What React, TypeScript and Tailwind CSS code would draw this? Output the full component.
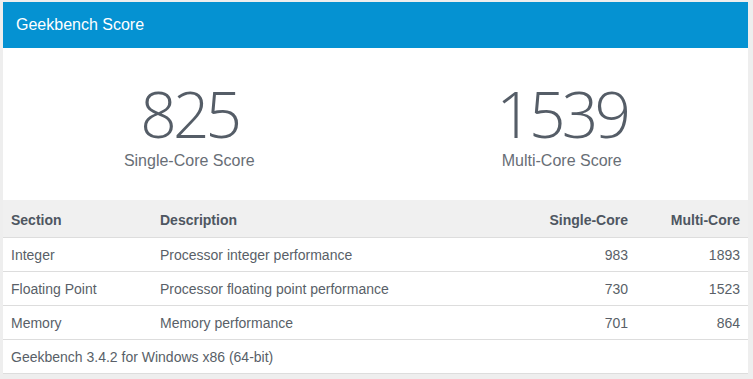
const rows = [
  { section: "Integer", desc: "Processor integer performance", single: "983", multi: "1893" },
  { section: "Floating Point", desc: "Processor floating point performance", single: "730", multi: "1523" },
  { section: "Memory", desc: "Memory performance", single: "701", multi: "864" },
];

const ScoreBlock = ({ value, label }: { value: string; label: string }) => (
  <div className="flex flex-col items-center">
    <span className="text-[64px] leading-[64px] font-light tracking-[-0.06em] text-[#555d67] font-['Open_Sans',sans-serif]">
      {value}
    </span>
    <span className="mt-[5px] text-[16px] leading-[20px] text-[#686e76]">{label}</span>
  </div>
);

export default function App() {
  return (
    <div className="h-[379px] w-[753px] bg-[#eeeeee] pt-[2px] pl-[3px] font-['Liberation_Sans',Arial,sans-serif]">
      <div className="w-[745px] bg-white border-b border-[#dddddd]">
        <div className="h-[46px] bg-[#0592d2] flex items-center px-[13px] text-white text-[16px]">
          Geekbench Score
        </div>
        <div className="h-[152px] grid grid-cols-2 pt-[34px]">
          <ScoreBlock value="825" label="Single-Core Score" />
          <ScoreBlock value="1539" label="Multi-Core Score" />
        </div>
        <div className="grid grid-cols-[149px_364px_120px_112px] text-[14px] text-[#595f68]">
          <div className="contents font-bold text-[#4e5661]">
            <div className="h-[37px] bg-[#f0f0f0] flex items-center pt-[3px] pl-[8px]">Section</div>
            <div className="h-[37px] bg-[#f0f0f0] flex items-center pt-[3px] pl-[8px]">Description</div>
            <div className="h-[37px] bg-[#f0f0f0] flex items-center justify-end pt-[3px] pr-[8px]">Single-Core</div>
            <div className="h-[37px] bg-[#f0f0f0] flex items-center justify-end pt-[3px] pr-[8px]">Multi-Core</div>
          </div>
          {rows.map((r) => (
            <div key={r.section} className="contents">
              <div className="h-[34px] border-t border-[#dddddd] flex items-center pt-[2px] pl-[8px]">{r.section}</div>
              <div className="h-[34px] border-t border-[#dddddd] flex items-center pt-[2px] pl-[8px]">{r.desc}</div>
              <div className="h-[34px] border-t border-[#dddddd] flex items-center justify-end pt-[2px] pr-[8px]">{r.single}</div>
              <div className="h-[34px] border-t border-[#dddddd] flex items-center justify-end pt-[2px] pr-[8px]">{r.multi}</div>
            </div>
          ))}
          <div className="col-span-4 h-[34px] border-t border-[#dddddd] flex items-center pt-[2px] pl-[8px]">
            Geekbench 3.4.2 for Windows x86 (64-bit)
          </div>
        </div>
      </div>
    </div>
  );
}
